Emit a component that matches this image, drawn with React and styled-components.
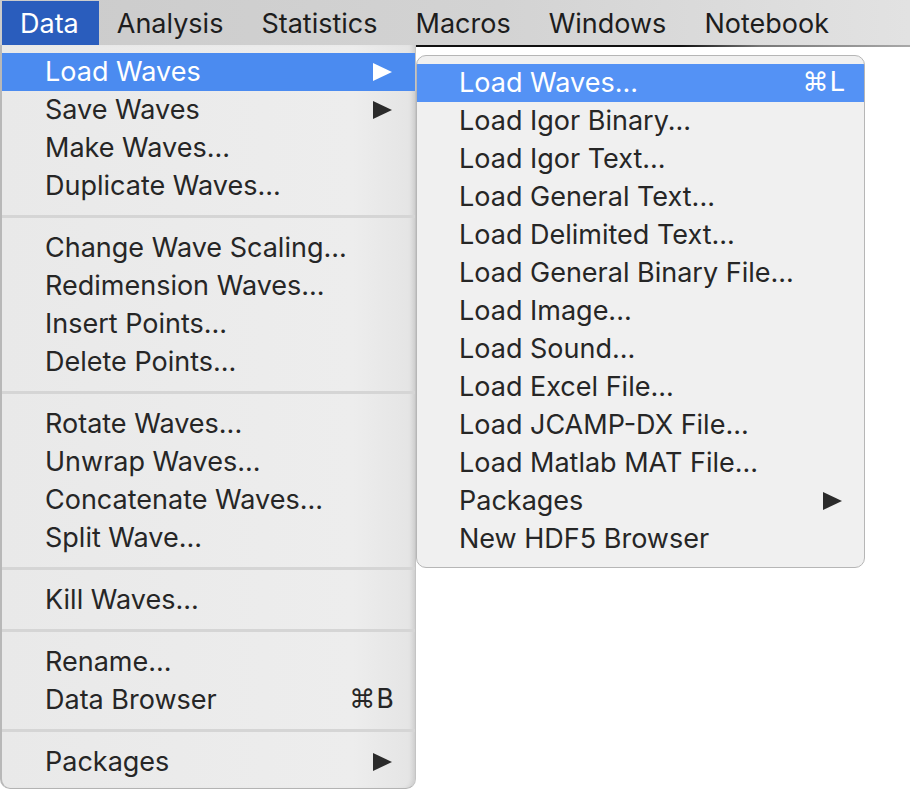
import styled, { createGlobalStyle } from "styled-components"

const GlobalStyle = createGlobalStyle`
  html, body {
    margin: 0;
    background: #ffffff;
  }
  body {
    font-family: Inter, "Liberation Sans", "DejaVu Sans", sans-serif;
    -webkit-font-smoothing: antialiased;
  }
`

const barTitles = ["Data", "Analysis", "Statistics", "Macros", "Windows", "Notebook"]

// null marks a separator line
const dataMenu = [
    { label: "Load Waves", sub: true, active: true },
    { label: "Save Waves", sub: true },
    { label: "Make Waves..." },
    { label: "Duplicate Waves..." },
    null,
    { label: "Change Wave Scaling..." },
    { label: "Redimension Waves..." },
    { label: "Insert Points..." },
    { label: "Delete Points..." },
    null,
    { label: "Rotate Waves..." },
    { label: "Unwrap Waves..." },
    { label: "Concatenate Waves..." },
    { label: "Split Wave..." },
    null,
    { label: "Kill Waves..." },
    null,
    { label: "Rename..." },
    { label: "Data Browser", key: "⌘B" },
    null,
    { label: "Packages", sub: true },
]

const loadMenu = [
    { label: "Load Waves...", key: "⌘L", active: true },
    { label: "Load Igor Binary..." },
    { label: "Load Igor Text..." },
    { label: "Load General Text..." },
    { label: "Load Delimited Text..." },
    { label: "Load General Binary File..." },
    { label: "Load Image..." },
    { label: "Load Sound..." },
    { label: "Load Excel File..." },
    { label: "Load JCAMP-DX File..." },
    { label: "Load Matlab MAT File..." },
    { label: "Packages", sub: true },
    { label: "New HDF5 Browser" },
]

const Screen = styled.div`
  width: 910px;
  height: 790px;
  overflow: hidden;
`

const MenuBar = styled.div`
  display: flex;
  align-items: stretch;
  height: 44px;
  padding: 1px 0 0 2px;
  background: linear-gradient(to right, #cbcbcb 0%, #d3d3d3 55%, #e2e2e2 100%);
`

const BarItem = styled.div`
  display: flex;
  align-items: center;
  padding: 0 20px 0 18px;
  font-size: 27px;
  color: ${props => props.$active ? "#ffffff" : "#1d1d1d"};
  background: ${props => props.$active ? "#2a5dbd" : "transparent"};
`

const MenuRow = styled.div`
  display: flex;
  align-items: flex-start;
  background: linear-gradient(to right, #111 0, #111 680px, #777 760px, #a8a8a8 100%) top left / 100% 2px no-repeat;
`

const DataPanel = styled.div`
  width: 413px;
  padding: 8px 0 7px;
  background: linear-gradient(to right, #e9e9e9 0%, #ededed 85%, #e4e4e4 100%);
  border-left: 2px solid #b8b8b8;
  border-right: 1px solid #c4c4c4;
  border-bottom: 1px solid #b3b3b3;
  border-radius: 0 0 10px 10px;
  box-shadow: inset -5px 0 5px -3px rgba(0, 0, 0, 0.12);
`

const SubPanel = styled.div`
  width: 447px;
  margin-top: 10px;
  padding: 8px 0 9px;
  background: #f0f0f0;
  border: 1px solid #b6b6b6;
  border-radius: 10px;
  overflow: hidden;
`

const Item = styled.div`
  display: flex;
  align-items: center;
  justify-content: space-between;
  box-sizing: border-box;
  height: 38px;
  padding: 0 ${props => props.$right}px 2px ${props => props.$left}px;
  font-size: 27px;
  color: ${props => props.$active ? "#ffffff" : "#262626"};
  background: ${props => props.$active ? props.$hl : "transparent"};
`

const Label = styled.span`
  white-space: nowrap;
`

const Shortcut = styled.span`
  margin-right: -3px;
  font-family: "DejaVu Sans", Inter, sans-serif;
  font-size: 26px;
  letter-spacing: 1px;
`

const Separator = styled.div`
  height: 3px;
  margin: 10px 0 11px;
  background: #d5d5d5;
`

const Arrow = ({ color }) => (
    <svg width="19" height="18" viewBox="0 0 19 18" style={{ marginTop: 2 }}>
        <polygon points="0,0 19,9 0,18" fill={color} />
    </svg>
)

const MenuList = ({ items, left, right, hl }) => (
    <>
        {items.map((item, i) => {
            if (!item) return <Separator key={i} />
            return (
                <Item key={i} $active={item.active} $left={left} $right={right} $hl={hl}>
                    <Label>{item.label}</Label>
                    {item.sub && <Arrow color={item.active ? "#ffffff" : "#2b2b2b"} />}
                    {item.key && <Shortcut>{item.key}</Shortcut>}
                </Item>
            )
        })}
    </>
)

const App = () => {
    return (<>
        <GlobalStyle />
        <Screen>
            <MenuBar>
                {barTitles.map((t, i) => (
                    <BarItem key={t} $active={i === 0}>{t}</BarItem>
                ))}
            </MenuBar>
            <MenuRow>
                <DataPanel>
                    <MenuList items={dataMenu} left={43} right={23} hl="#4b8bf0" />
                </DataPanel>
                <SubPanel>
                    <MenuList items={loadMenu} left={42} right={22} hl="#5492f5" />
                </SubPanel>
            </MenuRow>
        </Screen>
    </>)
}

export default App
